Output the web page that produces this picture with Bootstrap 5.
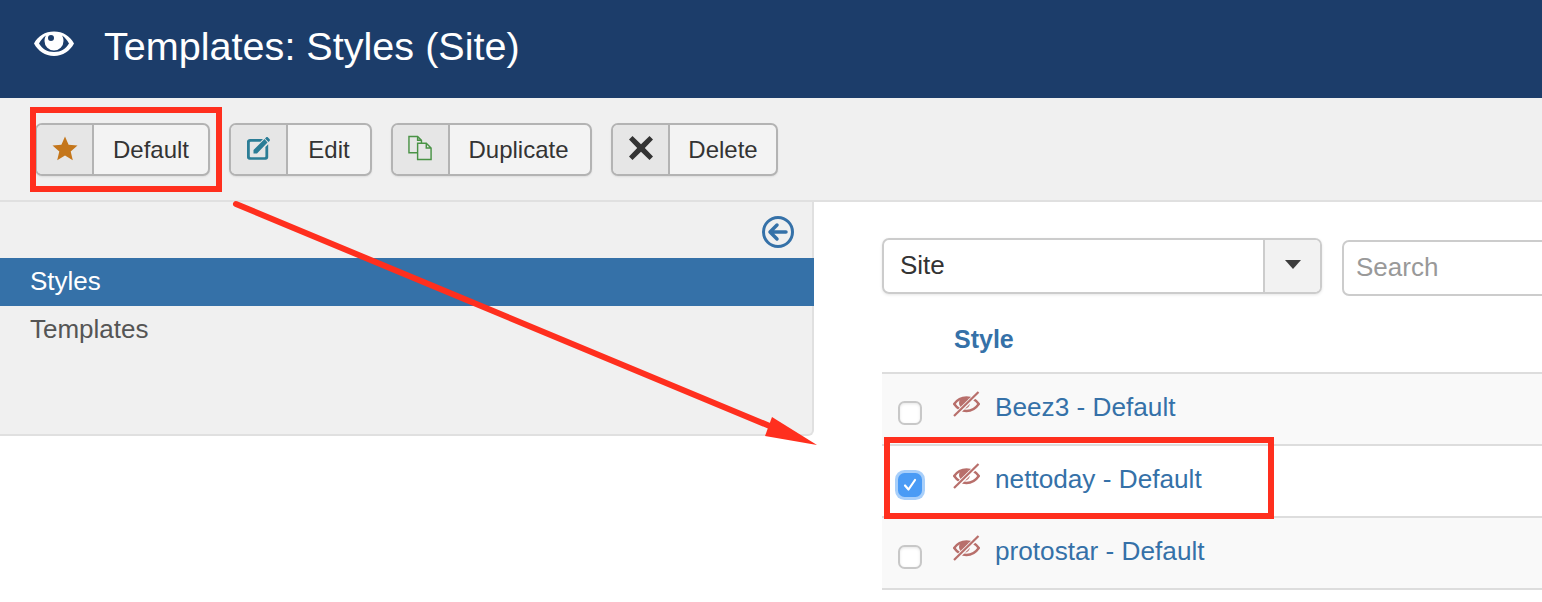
<!DOCTYPE html>
<html lang="en">
<head>
  <meta charset="UTF-8">
  <meta name="viewport" content="width=device-width, initial-scale=1.0">
  <title>Templates: Styles (Site)</title>
  <link href="https://cdn.jsdelivr.net/npm/bootstrap@5.3.0/dist/css/bootstrap.min.css" rel="stylesheet">
  <style>
    html, body {
      height: 602px;
      overflow: hidden;
    }
    body {
      font-family: "Liberation Sans", Arial, sans-serif;
      color: #333;
      background-color: #fff;
      position: relative;
    }
    .page-head {
      height: 98px;
      background-color: #1c3d6a;
      color: #fff;
      padding: 0 0 4px 34px;
      gap: 30px;
    }
    .page-head svg {
      margin-bottom: 6px;
    }
    .page-head h1 {
      font-size: 39.6px;
      font-weight: 400;
      margin: 0;
    }
    .tool-row {
      height: 104px;
      padding: 25px 0 0 35px;
      gap: 19px;
      background-color: #f0f0f0;
      border-bottom: 2px solid #e0e0e0;
    }
    .tool-btn {
      height: 53px;
      padding: 0;
      font-size: 24px;
      color: #333;
      background-color: #f3f3f3;
      border: 2px solid #b3b3b3;
      border-radius: 7px;
      overflow: hidden;
      box-shadow: 0 1px 2px rgba(0, 0, 0, .08);
    }
    .btn-def { width: 175px; }
    .btn-edit { width: 143px; }
    .btn-dup { width: 201px; }
    .btn-del { width: 167px; }
    .tool-icon {
      width: 57px;
      height: 100%;
      padding-bottom: 3px;
      background-color: #e6e6e6;
      border-right: 2px solid #b3b3b3;
      flex: none;
    }
    .tool-text {
      flex: 1;
      text-align: center;
    }
    .btn-dup .tool-text {
      padding-right: 3px;
    }
    .side-panel {
      width: 814px;
      height: 234px;
      flex: none;
      background-color: #f0f0f0;
      border-right: 2px solid #e0e0e0;
      border-bottom: 2px solid #e0e0e0;
      border-bottom-right-radius: 6px;
    }
    .side-top {
      height: 56px;
      padding: 14px 18px 0 0;
    }
    .side-link {
      display: block;
      height: 48px;
      line-height: 46px;
      padding-left: 30px;
      font-size: 26px;
      color: #555;
      text-decoration: none;
    }
    .side-link.on {
      margin-right: -2px;
      background-color: #3571a8;
      color: #fff;
    }
    .main-area {
      padding: 36px 0 0 68px;
      min-width: 0;
      flex: 1;
      overflow: hidden;
    }
    .filter-row {
      gap: 20px;
      height: 82px;
    }
    .site-select {
      width: 440px;
      height: 56px;
      flex: none;
      font-size: 26px;
      border: 2px solid #ccc;
      border-radius: 7px;
      overflow: hidden;
      box-shadow: 0 1px 3px rgba(0, 0, 0, .1);
    }
    .site-value {
      flex: 1;
      padding: 0 0 2px 16px;
    }
    .site-caret {
      width: 57px;
      height: 100%;
      padding-bottom: 3px;
      background-color: #f2f2f2;
      border-left: 2px solid #ccc;
    }
    .site-caret i {
      display: block;
      border-top: 9px solid #3c3c3c;
      border-left: 8px solid transparent;
      border-right: 8px solid transparent;
    }
    .search-box {
      width: 300px;
      height: 56px;
      margin-top: 2px;
      font-size: 26px;
      padding: 0 12px 2px;
      border: 2px solid #ccc;
      border-radius: 7px;
      flex: none;
    }
    .search-box::placeholder {
      color: #999;
    }
    .style-table {
      margin: 0;
      --bs-table-bg: transparent;
    }
    .style-table th {
      line-height: 38px;
      padding: 0 0 14px 72px;
      font-size: 25px;
      color: #3571a8;
      border-bottom: 2px solid #ddd;
    }
    .style-table td {
      height: 72px;
      padding: 0;
      background-color: #f9f9f9;
      border-bottom: 2px solid #ddd;
      vertical-align: top;
    }
    .style-table tr.picked td {
      background-color: #fff;
    }
    .row-cell {
      height: 70px;
      font-size: 26.2px;
    }
    .row-check {
      width: 72px;
      padding: 27px 0 0 16px;
    }
    .row-check input {
      width: 24px;
      height: 24px;
      margin: 0;
      display: block;
      background-color: #fff;
      border: 2px solid #c8c8c8;
      border-radius: 5px;
      box-shadow: inset 0 1px 3px rgba(0, 0, 0, .1);
    }
    .row-check input:checked {
      background-color: #4a9bf5;
      border-color: #4a9bf5;
      background-image: url("data:image/svg+xml,%3csvg xmlns='http://www.w3.org/2000/svg' viewBox='0 0 20 20'%3e%3cpath fill='none' stroke='%23fff' stroke-width='2.2' stroke-linecap='round' stroke-linejoin='round' d='M5 10.500l3.500 4L15 5'/%3e%3c/svg%3e");
      box-shadow: 0 0 0 3px #a8cffa;
    }
    .row-name {
      padding-top: 14px;
      gap: 15px;
    }
    .row-name svg {
      margin: 3px 0 0 -1px;
    }
    .row-name a {
      color: #3571a8;
      text-decoration: none;
    }
    .mark-box {
      position: absolute;
      border: 6px solid #ff2f1e;
      pointer-events: none;
    }
    .mark-one {
      left: 30px;
      top: 107px;
      width: 192px;
      height: 85px;
    }
    .mark-two {
      left: 884px;
      top: 437px;
      width: 390px;
      height: 82px;
    }
    .mark-arrow {
      position: absolute;
      left: 0;
      top: 0;
      pointer-events: none;
    }
  </style>
</head>
<body>
  <header class="page-head d-flex align-items-center">
    <svg width="40" height="30" viewBox="0 0 40 30" aria-hidden="true">
      <path fill="#fff" fill-rule="evenodd" d="M0 14.500C4 7 11 2.500 20 2.500S36 7 40 14.500C36 22 29 27 20 27S4 22 0 14.500ZM5 14.500C8 19.500 13 23 20 23s12-3.500 15-8.500C33 11 31 8.500 28 6.500c1 1.600 1.500 3.500 1.500 5.500a9.500 9.500 0 0 1-19 0c0-2 .5-3.900 1.500-5.500C9 8.500 7 11 5 14.500ZM17 6a3 3 0 1 0 0 6a3 3 0 0 0 0-6Z"/>
    </svg>
    <h1>Templates: Styles (Site)</h1>
  </header>

  <div class="tool-row d-flex align-items-start">
    <button type="button" class="btn tool-btn btn-def d-flex align-items-center">
      <span class="tool-icon d-flex align-items-center justify-content-center">
        <svg width="26" height="25" viewBox="0 0 26 25"><path fill="#c4761b" d="M13 .5l3.600 8.300 8.900.8-6.800 5.900 2.100 8.800L13 19.600l-7.800 4.700 2.100-8.800L.5 9.600l8.900-.8z"/></svg>
      </span>
      <span class="tool-text">Default</span>
    </button>
    <button type="button" class="btn tool-btn btn-edit d-flex align-items-center">
      <span class="tool-icon d-flex align-items-center justify-content-center">
        <svg width="24" height="24" viewBox="0 0 24 24"><path fill="#2b7d96" d="M3 3h13l-2.600 2.800H3.600a.8.800 0 0 0-.8.800v13.800c0 .4.400.8.800.8h14c.4 0 .8-.4.800-.8V11l2.800-2.800v13c0 1.500-1 2.500-2.500 2.500H2.500C1 23.700 0 22.700 0 21.200V5.500C0 4 1.500 3 3 3Z"/><path fill="#2b7d96" d="M6.500 14 17.500 3l3 3.400L10 17.500H6.500ZM19 1.500c.6-.6 1.500-.6 2 0l1.500 1.500c.6.600.6 1.500 0 2l-1 1-3.500-3.500Z"/></svg>
      </span>
      <span class="tool-text">Edit</span>
    </button>
    <button type="button" class="btn tool-btn btn-dup d-flex align-items-center">
      <span class="tool-icon d-flex align-items-center justify-content-center">
        <svg width="25" height="26" viewBox="0 0 26 26" fill="none" stroke="#4a9346" stroke-width="1.500"><path d="M10 18H1V1h9l4 4v3M10 1v4h4"/><path d="M10 8h9l5 5v12H10zM19 8v5h5"/></svg>
      </span>
      <span class="tool-text">Duplicate</span>
    </button>
    <button type="button" class="btn tool-btn btn-del d-flex align-items-center">
      <span class="tool-icon d-flex align-items-center justify-content-center">
        <svg width="26" height="26" viewBox="0 0 26 26"><path fill="#333" d="M4.500 1 13 9.200 21.500 1 25 4.500 16.800 13 25 21.500 21.500 25 13 16.800 4.500 25 1 21.500 9.200 13 1 4.500z"/></svg>
      </span>
      <span class="tool-text">Delete</span>
    </button>
  </div>

  <div class="d-flex">
    <aside class="side-panel">
      <div class="side-top d-flex justify-content-end">
        <svg width="32" height="32" viewBox="0 0 32 32" fill="none" stroke="#3571a8"><circle cx="16" cy="16" r="14.500" stroke-width="3"/><path stroke-width="3.500" stroke-linecap="round" stroke-linejoin="round" d="M24 16H8M15 9l-7 7 7 7"/></svg>
      </div>
      <nav class="nav flex-column">
        <a class="side-link on" href="#">Styles</a>
        <a class="side-link" href="#">Templates</a>
      </nav>
    </aside>

    <main class="main-area">
      <div class="filter-row d-flex align-items-start">
        <div class="site-select d-flex align-items-center">
          <span class="site-value">Site</span>
          <span class="site-caret d-flex align-items-center justify-content-center"><i></i></span>
        </div>
        <input type="text" class="form-control search-box" placeholder="Search">
      </div>
      <table class="table style-table">
        <thead>
          <tr><th>Style</th></tr>
        </thead>
        <tbody id="style-rows"></tbody>
      </table>
    </main>
  </div>

  <div class="mark-box mark-one"></div>
  <div class="mark-box mark-two"></div>
  <svg class="mark-arrow" width="1542" height="602" viewBox="0 0 1542 602">
    <path d="M236 204 772 427" stroke="#ff2f1e" stroke-width="6" stroke-linecap="round"/>
    <path fill="#ff2f1e" d="M817 445 765 436 772 417z"/>
  </svg>

  <script>
    // rows of the style list, second one is ticked in the picture
    const rows = [
      { name: 'Beez3 - Default', picked: false },
      { name: 'nettoday - Default', picked: true },
      { name: 'protostar - Default', picked: false }
    ];
    function eyeOff(bg) {
      return '<svg width="27" height="26" viewBox="0 0 27 26" fill="none" stroke="#b86f6b" stroke-width="2.400">' +
        '<path d="M1.200 13C4 9 8 6.500 13.500 6.500S23 9 25.800 13C23 17 19 20 13.500 20S4 17 1.200 13Z"/>' +
        '<circle cx="11.500" cy="12" r="5.500" fill="#b86f6b" stroke="none"/>' +
        '<path d="M4 22.500 24 3" stroke="' + bg + '" stroke-width="4.500"/>' +
        '<path d="M1 25 25.500 1" stroke-width="2.200"/></svg>';
    }
    document.getElementById('style-rows').innerHTML = rows.map(function(row) {
      return '<tr class="' + (row.picked ? 'picked' : '') + '"><td>' +
        '<div class="row-cell d-flex">' +
        '<div class="row-check"><input class="form-check-input" type="checkbox"' + (row.picked ? ' checked' : '') + '></div>' +
        '<div class="row-name d-flex align-items-start">' + eyeOff(row.picked ? '#fff' : '#f9f9f9') + '<a href="#">' + row.name + '</a></div>' +
        '</div></td></tr>';
    }).join('');
  </script>
  <script src="https://cdn.jsdelivr.net/npm/bootstrap@5.3.0/dist/js/bootstrap.bundle.min.js"></script>
</body>
</html>
